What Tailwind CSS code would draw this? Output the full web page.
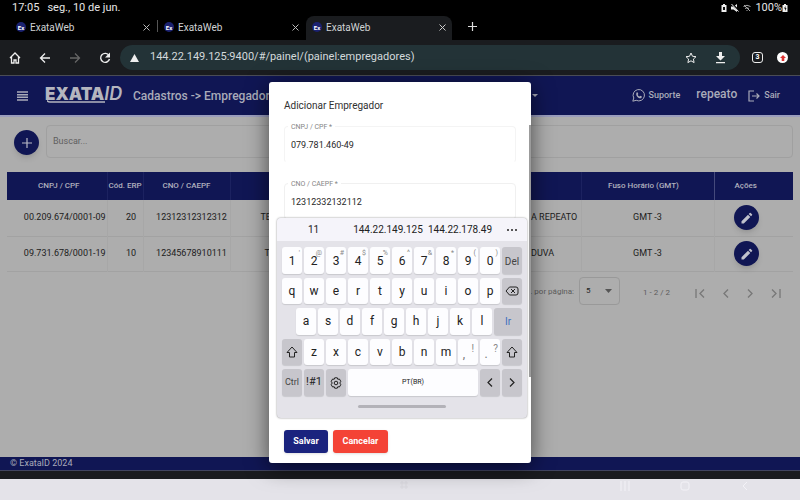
<!DOCTYPE html>
<html lang="pt-BR">
<head>
<meta charset="utf-8">
<meta name="viewport" content="width=device-width, initial-scale=1">
<title>ExataWeb</title>
<script src="https://cdn.jsdelivr.net/npm/@tailwindcss/browser@4"></script>
</head>
<body class="relative flex min-h-screen flex-col overflow-x-hidden bg-[#adadad] font-[Roboto,sans-serif] text-[9px] text-[#202020]">

<!-- System status -->
<div class="flex h-4 items-center justify-between bg-black pr-3 pl-3 text-[11px] text-[#e6e6e6]">
  <div class="flex gap-2"><span>17:05</span><span>seg., 10 de jun.</span></div>
  <div class="flex items-center gap-1">
    <svg class="h-2 w-[6px]" viewBox="0 0 6 8"><path fill="#eee" d="M1 1h1V0h2v1h1.500v7h-5V1z"/><path fill="#111" d="M2 3h2v3H2z"/></svg>
    <svg class="size-2" viewBox="0 0 8 8"><path fill="#eee" d="M0 2.500h2.500L6 0v8L2.500 5.500H0z"/><path stroke="#000" stroke-width="2" d="M1 0l8 8"/><path stroke="#eee" d="M.5 0l7 7.500"/></svg>
    <svg class="size-2" viewBox="0 0 8 8" fill="none" stroke="#aaa"><path d="M.5 2.500q3.500-2.500 7 0M2 4.500q2-1.500 4 0M1 1l6 6M4 6v1"/></svg>
    <div class="flex items-center"><span>100%</span><svg class="h-2 w-[6px]" viewBox="0 0 6 8"><path fill="#eee" d="M2 0h2v1h1.500v7h-5V1H2z"/><path fill="#111" d="M3.500 2L2 4.500h1V7l1.500-3h-1z"/></svg></div>
  </div>
</div>

<!-- Tab strip -->
<nav class="flex h-6 items-end bg-black text-[10px] text-[#d0d3d5]" aria-label="Abas">
  <div class="flex h-6 w-[157px] items-center gap-1 pb-[2px] pl-4">
    <span class="flex size-[10px] items-center justify-center rounded-full bg-[#1b2270] text-[6px] font-bold text-white">Ex</span>
    <a href="#" class="flex-1">ExataWeb</a>
    <button aria-label="Fechar aba" class="mr-[7px]"><svg class="size-[7px]" viewBox="0 0 7 7" stroke="#bbb"><path d="M.5.5l6 6M6.500.5l-6 6"/></svg></button>
  </div>
  <div class="mb-2 h-3 w-px bg-[#555]"></div>
  <div class="flex h-6 w-[148px] items-center gap-1 pb-[2px] pl-[6px]">
    <span class="flex size-[10px] items-center justify-center rounded-full bg-[#1b2270] text-[6px] font-bold text-white">Ex</span>
    <a href="#" class="flex-1">ExataWeb</a>
    <button aria-label="Fechar aba" class="mr-[7px]"><svg class="size-[7px]" viewBox="0 0 7 7" stroke="#bbb"><path d="M.5.5l6 6M6.500.5l-6 6"/></svg></button>
  </div>
  <div class="flex h-6 w-[146px] items-center gap-1 rounded-t-lg bg-[#1a1c1f] pb-[2px] pl-[6px]">
    <span class="flex size-[10px] items-center justify-center rounded-full bg-[#1b2270] text-[6px] font-bold text-white">Ex</span>
    <a href="#" class="flex-1">ExataWeb</a>
    <button aria-label="Fechar aba" class="mr-[6px]"><svg class="size-[7px]" viewBox="0 0 7 7" stroke="#ccc"><path d="M.5.5l6 6M6.500.5l-6 6"/></svg></button>
  </div>
  <button aria-label="Nova aba" class="mb-[9px] ml-4"><svg class="size-[9px]" viewBox="0 0 9 9" stroke="#ddd" stroke-width="1.200"><path d="M4.500 0v9M0 4.500h9"/></svg></button>
</nav>

<!-- Address bar -->
<div class="flex h-9 items-center border-b border-[#4a4c55] bg-[#1a1c1f]">
  <div class="flex w-[120px] items-center gap-[18px] pl-[9px]">
    <button aria-label="Início"><svg class="size-3" viewBox="0 0 12 12" fill="none" stroke="#eee" stroke-width="1.300"><path d="M1 6l5-5 5 5M2.500 5v6h2.500V8h2v3h2.500V5"/></svg></button>
    <button aria-label="Voltar"><svg class="size-3" viewBox="0 0 12 12" fill="none" stroke="#eee" stroke-width="1.300"><path d="M11 6H1.500M6 1.500L1.500 6 6 10.500"/></svg></button>
    <button aria-label="Avançar"><svg class="size-3" viewBox="0 0 12 12" fill="none" stroke="#666" stroke-width="1.300"><path d="M1 6h9.500M6 1.500L10.500 6 6 10.500"/></svg></button>
    <button aria-label="Recarregar"><svg class="size-3" viewBox="0 0 12 12" fill="none" stroke="#eee" stroke-width="1.400"><path d="M10 3.500A4.500 4.500 0 1 0 10.500 7"/><path fill="#eee" stroke="none" d="M11 .5v5H6z"/></svg></button>
  </div>
  <div class="flex h-[25px] flex-1 items-center rounded-full bg-[#233337] pr-[14px] pl-[10px]">
    <svg class="mr-[11px] h-2 w-[9px]" viewBox="0 0 9 8"><path fill="#eee" d="M4.500 0L9 8H0z"/></svg>
    <input aria-label="Endereço" class="min-w-0 flex-1 text-[11px] text-[#d3dadc] outline-none" value="144.22.149.125:9400/#/painel/(painel:empregadores)">
    <button aria-label="Favoritar" class="mr-[18px]"><svg class="size-3" viewBox="0 0 12 12" fill="none" stroke="#eee"><path d="M6 1l1.500 3.300 3.500.4-2.600 2.400.7 3.500L6 8.800l-3.100 1.800.7-3.500L1 4.700l3.500-.4z"/></svg></button>
    <button aria-label="Baixar"><svg class="h-3 w-[11px]" viewBox="0 0 11 12" fill="#eee"><path d="M4 0h3v4h3L5.500 8.500 1 4h3zM1 10h9v1.300H1z"/></svg></button>
  </div>
  <div class="flex w-15 items-center gap-[14px] pl-3">
    <button aria-label="Guias abertas" class="flex size-[11px] items-center justify-center rounded-[3px] border border-[#eee] text-[7px] font-bold text-white">3</button>
    <button aria-label="Atualizar" class="flex size-[11px] items-center justify-center rounded-full bg-white"><svg class="size-[6px]" viewBox="0 0 7 7"><path fill="#d33" d="M3.500 0L7 3.500H5V7H2V3.500H0z"/></svg></button>
  </div>
</div>

<!-- App header -->
<header class="flex h-[39px] items-center bg-[#101654] pl-[17px] text-[#a9abb9]">
  <button aria-label="Menu" class="mr-[17px]"><svg class="h-[10px] w-[11px]" viewBox="0 0 11 10" stroke="#a9abb9" stroke-width="1.400"><path d="M0 1h11M0 3.700h11M0 6.300h11M0 9h11"/></svg></button>
  <div class="relative w-[88px] leading-4 whitespace-nowrap text-[#b4b5bf]"><span class="font-[Inter,sans-serif] text-[17px] font-black">EXATA</span><span class="font-[Inter,sans-serif] text-[18px] font-semibold italic">ID</span>
    <svg class="absolute top-[14px] left-[2px] h-[3px] w-[60px]" viewBox="0 0 60 3" fill="none" stroke="#b4b5bf" stroke-width="1.500"><path d="M0 .5Q1 2 3 2H58"/></svg>
  </div>
  <h1 class="flex-1 text-[12px] font-medium whitespace-nowrap">Cadastros -&gt; Empregadores</h1>
  <div class="mr-[94px] border-x-[3px] border-t-[3px] border-x-transparent border-t-[#a9abb9]"></div>
  <a href="#" class="mr-4 flex items-center gap-1 font-medium"><svg class="size-[13px]" viewBox="0 0 13 13" fill="none" stroke="#a9abb9"><path d="M.8 12.200l1-3.200a5.700 5.700 0 1 1 2.400 2.300z"/><path fill="#a9abb9" stroke="none" d="M4.500 3.500l1-.2.8 1.700-.6.8c.5 1 1 1.400 1.900 1.800l.7-.8 1.600.8c0 2-1.800 2-3.200 1.300C5 8 3.500 6 4.500 3.500z"/></svg>Suporte</a>
  <span class="mr-[11px] pb-[3px] text-[12px] font-medium">repeato</span>
  <a href="#" class="mr-5 flex items-center gap-1 font-medium"><svg class="h-3 w-[12px]" viewBox="0 0 12 12" fill="none" stroke="#a9abb9" stroke-width="1.200"><path d="M6 1H1v10h5M4 6h7M8.500 3.500L11 6 8.500 8.500"/></svg>Sair</a>
</header>

<!-- Page content -->
<main class="flex-1 border-t-2 border-[#9a9dbd] px-[7px]">
  <div class="flex h-[55px] items-start gap-[7px] pt-2 pl-[7px]">
    <button aria-label="Adicionar" class="mt-[5px] flex size-[25px] items-center justify-center rounded-full bg-[#101654] shadow-md"><svg class="size-[10px]" viewBox="0 0 10 10" stroke="#b9bac6" stroke-width="1.200"><path d="M5 0v10M0 5h10"/></svg></button>
    <input aria-label="Buscar" placeholder="Buscar..." class="h-[33px] min-w-0 flex-1 rounded-[4px] border border-[#a0a0a0] px-[6px] pb-[2px] text-[9px] placeholder:text-[#606060]">
  </div>
  <table class="w-full table-fixed border-collapse text-center">
    <colgroup><col class="w-[100px]"><col class="w-[36px]"><col class="w-[87px]"><col><col class="w-[50px]"><col class="w-[133px]"><col class="w-[79px]"></colgroup>
    <thead>
      <tr class="h-7 bg-[#101654] text-[8px] whitespace-nowrap text-[#b0b1be]">
        <th class="pl-1 font-medium">CNPJ / CPF</th><th class="border-l border-[#1c2260] font-medium">Cód. ERP</th><th class="border-l border-[#1c2260] font-medium">CNO / CAEPF</th><th class="border-l border-[#1c2260]"></th><th></th><th class="border-l border-[#1c2260] pr-2 font-medium">Fuso Horário (GMT)</th><th class="border-l border-[#454a7c] pr-4 font-medium">Ações</th>
      </tr>
    </thead>
    <tbody class="whitespace-nowrap">
      <tr class="h-9 border-b border-[#a2a2a2]">
        <td class="pl-4">00.209.674/0001-09</td><td class="border-l border-[#a7a7a7] pl-3">20</td><td class="border-l border-[#a7a7a7] pl-[10px]">12312312312312</td><td class="border-l border-[#a7a7a7] pl-[30px] text-left">TE</td><td class="text-left">A REPEATO</td><td class="border-l border-[#a7a7a7]">GMT -3</td>
        <td class="border-l border-[#a7a7a7] pr-[14px]"><button aria-label="Editar" class="inline-flex size-[25px] items-center justify-center rounded-full bg-[#101654] align-middle shadow-md"><svg class="size-3" viewBox="0 0 12 12" fill="#c0c1cc"><path d="M.5 9.200V11.500H2.800L9.300 5 7 2.700zM11 3.300a.7.7 0 0 0 0-1L9.700 1a.7.7 0 0 0-1 0l-1 1L10 4.300z"/></svg></button></td>
      </tr>
      <tr class="h-[35px] border-b border-[#a2a2a2]">
        <td class="pl-4">09.731.678/0001-19</td><td class="border-l border-[#a7a7a7] pl-3">10</td><td class="border-l border-[#a7a7a7] pl-[10px]">12345678910111</td><td class="border-l border-[#a7a7a7] pl-[34px] text-left">TE</td><td class="text-left">DUVA</td><td class="border-l border-[#a7a7a7]">GMT -3</td>
        <td class="border-l border-[#a7a7a7] pr-[14px]"><button aria-label="Editar" class="inline-flex size-[25px] items-center justify-center rounded-full bg-[#101654] align-middle shadow-md"><svg class="size-3" viewBox="0 0 12 12" fill="#c0c1cc"><path d="M.5 9.200V11.500H2.800L9.300 5 7 2.700zM11 3.300a.7.7 0 0 0 0-1L9.700 1a.7.7 0 0 0-1 0l-1 1L10 4.300z"/></svg></button></td>
      </tr>
    </tbody>
  </table>
  <div class="flex items-center justify-end pt-[5px] pr-3 text-[8px] text-[#5c5c5c]">
    <label for="page-size" class="mt-[3px] mr-[5px]">Qtd. por página:</label>
    <div class="relative mr-[23px]">
      <select id="page-size" class="h-7 w-[41px] appearance-none rounded-[4px] border border-[#999] pl-[6px] text-[#222]"><option>5</option></select>
      <svg class="pointer-events-none absolute top-3 right-2 h-1 w-[7px]" viewBox="0 0 7 4"><path fill="#555" d="M0 0h7L3.500 4z"/></svg>
    </div>
    <span class="mt-[5px] mr-[25px]">1 - 2 / 2</span>
    <div class="mt-[5px] flex items-center gap-[18px]">
      <button aria-label="Primeira página"><svg class="h-[9px] w-[10px]" viewBox="0 0 10 9" fill="none" stroke="#777" stroke-width="1.300"><path d="M1 0v9M9 .5l-4 4 4 4"/></svg></button>
      <button aria-label="Página anterior"><svg class="h-[9px] w-[6px]" viewBox="0 0 6 9" fill="none" stroke="#777" stroke-width="1.300"><path d="M5 .5l-4 4 4 4"/></svg></button>
      <button aria-label="Próxima página"><svg class="h-[9px] w-[6px]" viewBox="0 0 6 9" fill="none" stroke="#777" stroke-width="1.300"><path d="M1 .5l4 4-4 4"/></svg></button>
      <button aria-label="Última página"><svg class="h-[9px] w-[10px]" viewBox="0 0 10 9" fill="none" stroke="#777" stroke-width="1.300"><path d="M9 0v9M1 .5l4 4-4 4"/></svg></button>
    </div>
  </div>
</main>

<footer class="h-[14px] border-b border-[#41445f] bg-[#101654] pl-[10px] text-[9px] leading-[13px] text-[#a9abb9]">© ExataID 2024</footer>
<div class="h-2 bg-[#1a1b1f]"></div>
<div class="flex h-[21px] justify-end gap-[50px] bg-[#e4e3e9] pt-[2px] pr-[50px]">
  <svg class="mr-[160px] size-[10px]" viewBox="0 0 10 10" fill="none" stroke="#dad9df"><path d="M1 1h2v2H1zM5 1h2v2H5zM1 5h2v2H1zM5 5h2v2H5z"/></svg>
  <svg class="size-[10px]" viewBox="0 0 10 10" fill="none" stroke="#f3f2f7"><path d="M1 0v10M5 0v10M9 0v10"/></svg>
  <svg class="size-[10px]" viewBox="0 0 10 10" fill="none" stroke="#f3f2f7"><rect x="1" y="1" width="8" height="8" rx="2"/></svg>
  <svg class="size-[10px]" viewBox="0 0 10 10" fill="none" stroke="#f3f2f7"><path d="M7 1L3 5l4 4"/></svg>
</div>

<!-- Dialog layer -->
<div class="absolute inset-x-0 top-[82px] flex justify-center">
  <section role="dialog" aria-labelledby="dialog-title" class="relative w-[262px] rounded-[3px] bg-white px-[15px] pt-[17px] pb-[10px] shadow-[0_4px_22px_rgba(0,0,0,0.6)]">
    <h2 id="dialog-title" class="text-[10px] leading-[14px] text-[#303030]">Adicionar Empregador</h2>
    <div class="mt-[9px] flex flex-col gap-4">
      <div>
        <label for="cnpj" class="relative z-10 ml-1 block w-fit bg-white px-[3px] text-[7px] leading-[10px] text-[#858585]">CNPJ / CPF *</label>
        <input id="cnpj" value="079.781.460-49" class="-mt-[6px] block h-[37px] w-full rounded-[4px] border border-[#f4f4f4] border-b-transparent px-[6px] text-[9px] text-[#282828]">
      </div>
      <div>
        <label for="cno" class="relative z-10 ml-1 block w-fit bg-white px-[3px] text-[7px] leading-[10px] text-[#858585]">CNO / CAEPF *</label>
        <input id="cno" value="12312332132112" class="-mt-[6px] block h-[37px] w-full rounded-[4px] border border-[#f0f0f0] px-[6px] text-[9px] text-[#282828]">
      </div>
    </div>
    <div class="mt-[190px] h-[10px] pl-[7px] text-[7px] leading-[10px] text-[#999]">Razão Social</div>
    <div class="mt-[10px] flex gap-[5px] text-[9px] font-bold text-white">
      <button class="h-[23px] w-11 rounded-[3px] bg-[#1a237e] shadow-sm">Salvar</button>
      <button class="h-[23px] w-[55px] rounded-[3px] bg-[#f44336] shadow-sm">Cancelar</button>
    </div>
    <div class="absolute top-[43px] right-0 h-[252px] w-[2px] bg-[#9b9b9b]"></div>

    <!-- On-screen keyboard -->
    <div class="absolute top-[136px] left-2 z-20 w-[250px] overflow-hidden rounded-[4px] bg-[#e4e3e9] text-[#222] shadow-[0_0_2px_rgba(0,0,0,0.5)]">
      <div class="flex h-[23px] items-center bg-[#f5f4fa] pr-[10px] text-[10px]">
        <button class="w-[73px]">11</button><button class="w-[76px] text-center">144.22.149.125</button><button class="w-[68px] text-center">144.22.178.49</button>
        <button aria-label="Mais" class="ml-auto"><svg class="h-[2px] w-[10px]" viewBox="0 0 10 2" fill="#222"><circle cx="1" cy="1" r="1"/><circle cx="5" cy="1" r="1"/><circle cx="9" cy="1" r="1"/></svg></button>
      </div>
      <div class="grid h-[155px] grid-rows-5 gap-1 px-[5px] pt-[6px] text-[12px] [&_button]:rounded-[3px] [&_button]:shadow-[0_1px_1px_rgba(0,0,0,0.12)]">
        <div class="grid grid-cols-11 gap-[2px]">
          <button class="relative bg-[#fdfdff] pt-[2px]">1<sup class="absolute top-[6px] right-[2px] text-[7px] text-[#888]">'</sup></button>
          <button class="relative bg-[#fdfdff] pt-[2px]">2<sup class="absolute top-[6px] right-[2px] text-[7px] text-[#888]">@</sup></button>
          <button class="relative bg-[#fdfdff] pt-[2px]">3<sup class="absolute top-[6px] right-[2px] text-[7px] text-[#888]">#</sup></button>
          <button class="relative bg-[#fdfdff] pt-[2px]">4<sup class="absolute top-[6px] right-[2px] text-[7px] text-[#888]">$</sup></button>
          <button class="relative bg-[#fdfdff] pt-[2px]">5<sup class="absolute top-[6px] right-[2px] text-[7px] text-[#888]">%</sup></button>
          <button class="relative bg-[#fdfdff] pt-[2px]">6<sup class="absolute top-[6px] right-[2px] text-[7px] text-[#888]">^</sup></button>
          <button class="relative bg-[#fdfdff] pt-[2px]">7<sup class="absolute top-[6px] right-[2px] text-[7px] text-[#888]">&amp;</sup></button>
          <button class="relative bg-[#fdfdff] pt-[2px]">8<sup class="absolute top-[6px] right-[2px] text-[7px] text-[#888]">*</sup></button>
          <button class="relative bg-[#fdfdff] pt-[2px]">9<sup class="absolute top-[6px] right-[2px] text-[7px] text-[#888]">(</sup></button>
          <button class="relative bg-[#fdfdff] pt-[2px]">0<sup class="absolute top-[6px] right-[2px] text-[7px] text-[#888]">)</sup></button>
          <button class="bg-[#c7c6cc] pt-[2px] text-[10px] text-[#444]">Del</button>
        </div>
        <div class="grid grid-cols-11 gap-[2px]">
          <button class="bg-[#fdfdff]">q</button><button class="bg-[#fdfdff]">w</button><button class="bg-[#fdfdff]">e</button><button class="bg-[#fdfdff]">r</button><button class="bg-[#fdfdff]">t</button><button class="bg-[#fdfdff]">y</button><button class="bg-[#fdfdff]">u</button><button class="bg-[#fdfdff]">i</button><button class="bg-[#fdfdff]">o</button><button class="bg-[#fdfdff]">p</button>
          <button aria-label="Apagar" class="flex items-center justify-center bg-[#c7c6cc]"><svg class="h-[10px] w-[14px]" viewBox="0 0 14 10" fill="none" stroke="#222"><path d="M4.500 1H11q2 0 2 2v4q0 2-2 2H4.500L1 5zM6 3l4 4M10 3L6 7"/></svg></button>
        </div>
        <div class="flex gap-[2px] pl-[14px]">
          <button class="w-5 bg-[#fdfdff]">a</button><button class="w-5 bg-[#fdfdff]">s</button><button class="w-5 bg-[#fdfdff]">d</button><button class="w-5 bg-[#fdfdff]">f</button><button class="w-5 bg-[#fdfdff]">g</button><button class="w-5 bg-[#fdfdff]">h</button><button class="w-5 bg-[#fdfdff]">j</button><button class="w-5 bg-[#fdfdff]">k</button><button class="w-5 bg-[#fdfdff]">l</button>
          <button class="flex-1 bg-[#c7c6cc] text-[10px] text-[#3d6fc0]">Ir</button>
        </div>
        <div class="grid grid-cols-11 gap-[2px]">
          <button aria-label="Maiúsculas" class="flex items-center justify-center bg-[#c7c6cc]"><svg class="size-3" viewBox="0 0 12 12" fill="none" stroke="#222" stroke-linejoin="round"><path d="M6 1l5 5.500H8.500V11h-5V6.500H1z"/></svg></button>
          <button class="bg-[#fdfdff]">z</button><button class="bg-[#fdfdff]">x</button><button class="bg-[#fdfdff]">c</button><button class="bg-[#fdfdff]">v</button><button class="bg-[#fdfdff]">b</button><button class="bg-[#fdfdff]">n</button><button class="bg-[#fdfdff]">m</button>
          <button class="relative bg-[#fdfdff] pt-1 pr-2 text-[#777]">,<sup class="absolute top-[10px] right-1 text-[10px] text-[#888]">!</sup></button>
          <button class="relative bg-[#fdfdff] pt-1 pr-2 text-[#777]">.<sup class="absolute top-[10px] right-[2px] text-[10px] text-[#888]">?</sup></button>
          <button aria-label="Maiúsculas" class="flex items-center justify-center bg-[#c7c6cc]"><svg class="size-3" viewBox="0 0 12 12" fill="none" stroke="#222" stroke-linejoin="round"><path d="M6 1l5 5.500H8.500V11h-5V6.500H1z"/></svg></button>
        </div>
        <div class="flex gap-[2px]">
          <button class="w-5 bg-[#c7c6cc] text-[9px] text-[#444]">Ctrl</button>
          <button class="w-5 bg-[#c7c6cc] text-[11px]">!#1</button>
          <button aria-label="Configurações" class="flex w-5 items-center justify-center bg-[#c7c6cc]"><svg class="size-3" viewBox="0 0 12 12" fill="none" stroke="#222" stroke-linejoin="round"><path d="M4.700.8h2.600l.5 1.500 1.600-.3 1.400 2.300L9.800 6l1 1.700L9.400 10l-1.600-.3-.5 1.500H4.700l-.5-1.500-1.600.3-1.400-2.300 1-1.700-1-1.700L2.600 2l1.600.3z"/><circle cx="6" cy="6" r="1.800"/></svg></button>
          <button class="flex-1 bg-[#fdfdff] text-[7px]">PT(BR)</button>
          <button aria-label="Esquerda" class="flex w-5 items-center justify-center bg-[#c7c6cc]"><svg class="h-[9px] w-[6px]" viewBox="0 0 6 9" fill="none" stroke="#222" stroke-width="1.200"><path d="M5 .5l-4 4 4 4"/></svg></button>
          <button aria-label="Direita" class="flex w-5 items-center justify-center bg-[#c7c6cc]"><svg class="h-[9px] w-[6px]" viewBox="0 0 6 9" fill="none" stroke="#222" stroke-width="1.200"><path d="M1 .5l4 4-4 4"/></svg></button>
        </div>
      </div>
      <div class="mx-auto mt-[9px] mb-[10px] h-[3px] w-[88px] rounded-full bg-[#b3b2b8]"></div>
    </div>
  </section>
</div>
</body>
</html>
